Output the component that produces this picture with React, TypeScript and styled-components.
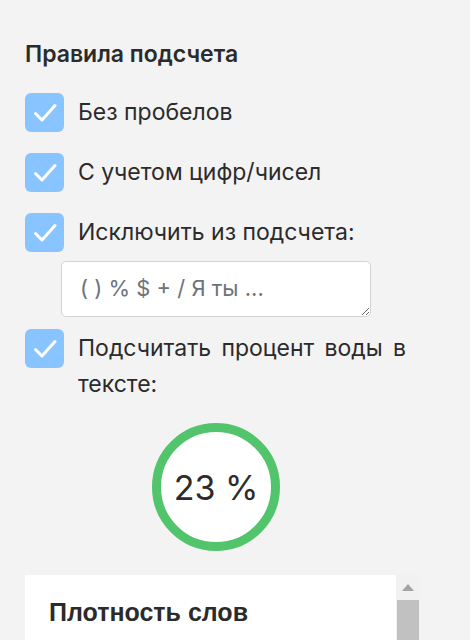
import React from "react";
import styled, { createGlobalStyle } from "styled-components";

const Global = createGlobalStyle`
  html, body { margin: 0; padding: 0; background: #f3f3f3; }
  body { font-family: "Inter", sans-serif; color: #2b2b2b; }
  * { box-sizing: border-box; }
`;

const Page = styled.div`
  width: 470px;
  height: 640px;
  overflow: hidden;
  padding: 36px 25px 0 25px;
  display: flex;
  flex-direction: column;
`;

const Title = styled.h3`
  margin: 0 0 21px 0;
  font-family: "Inter", sans-serif;
  font-size: 23px;
  font-weight: 600;
  line-height: 36px;
  color: #2b2b2b;
`;

const Options = styled.div`
  display: flex;
  flex-direction: column;
  gap: 21px;
`;

const Option = styled.label<{ $gapTop?: number }>`
  display: flex;
  align-items: flex-start;
  gap: 14px;
  margin-top: ${(p) => p.$gapTop ?? 0}px;
  font-family: "Inter", sans-serif;
  font-size: 23px;
  line-height: 36px;
  color: #2b2b2b;
`;

const Box = styled.span`
  flex: none;
  width: 39px;
  height: 39px;
  border-radius: 6px;
  background: #88c4ff;
  display: flex;
  align-items: center;
  justify-content: center;
`;

const Label = styled.span`
  padding-top: 1px;
  max-width: 328px;
  text-align: justify;
`;

const Group = styled.div`
  display: flex;
  flex-direction: column;
  gap: 9px;
`;

const Field = styled.textarea`
  margin-left: 36px;
  width: 310px;
  height: 56px;
  border: 1px solid #d0d4d9;
  border-radius: 5px;
  background: #fff;
  padding: 10px 18px;
  font-family: "Inter", sans-serif;
  font-size: 22px;
  line-height: 32px;
  resize: vertical;
  outline: none;
  &::placeholder { color: #6c737d; }
`;

const Gauge = styled.div`
  flex: none;
  align-self: center;
  margin: 21px 38px 0 0;
  width: 128px;
  height: 128px;
  border-radius: 50%;
  border: 9px solid #52c46c;
  background: #fff;
  display: flex;
  align-items: center;
  justify-content: center;
  font-family: "Inter", sans-serif;
  font-size: 34px;
  font-weight: 400;
  color: #2b2b2b;
`;

const Panel = styled.div`
  flex: none;
  margin-top: 24px;
  display: flex;
  width: 395px;
  height: 200px;
`;

const Card = styled.div`
  flex: 1;
  background: #fff;
  padding: 20px 24px;
`;

const CardTitle = styled.h4`
  margin: 0;
  font-family: "Liberation Sans", Arial, sans-serif;
  font-size: 25px;
  font-weight: 700;
  line-height: 34px;
  color: #2b2b2b;
`;

const Track = styled.div`
  width: 24px;
  background: #f1f1f1;
  display: flex;
  flex-direction: column;
  align-items: center;
`;

const Arrow = styled.div`
  height: 25px;
  display: flex;
  align-items: center;
  justify-content: center;
`;

const Thumb = styled.div`
  width: 22px;
  flex: 1;
  background: #c1c1c1;
`;

const Check = () => (
  <svg width="24" height="24" viewBox="0 0 24 24" fill="none">
    <path d="M2.5 12.5L9 19L22 4.5" stroke="#fff" strokeWidth="3" strokeLinecap="round" strokeLinejoin="round" />
  </svg>
);

export default function App() {
  return (
    <Page>
      <Global />
      <Title>Правила подсчета</Title>
      <Options>
        <Option>
          <Box><Check /></Box>
          <Label>Без пробелов</Label>
        </Option>
        <Option>
          <Box><Check /></Box>
          <Label>С учетом цифр/чисел</Label>
        </Option>
        <Group>
          <Option>
            <Box><Check /></Box>
            <Label>Исключить из подсчета:</Label>
          </Option>
          <Field placeholder="( ) % $ + / Я ты ..." />
        </Group>
      </Options>
      <Option $gapTop={12}>
        <Box><Check /></Box>
        <Label>Подсчитать процент воды в тексте:</Label>
      </Option>
      <Gauge>23 %</Gauge>
      <Panel>
        <Card>
          <CardTitle>Плотность слов</CardTitle>
        </Card>
        <Track>
          <Arrow>
            <svg width="12" height="7" viewBox="0 0 12 7"><path d="M6 0L12 7H0z" fill="#a3a3a3" /></svg>
          </Arrow>
          <Thumb />
        </Track>
      </Panel>
    </Page>
  );
}
